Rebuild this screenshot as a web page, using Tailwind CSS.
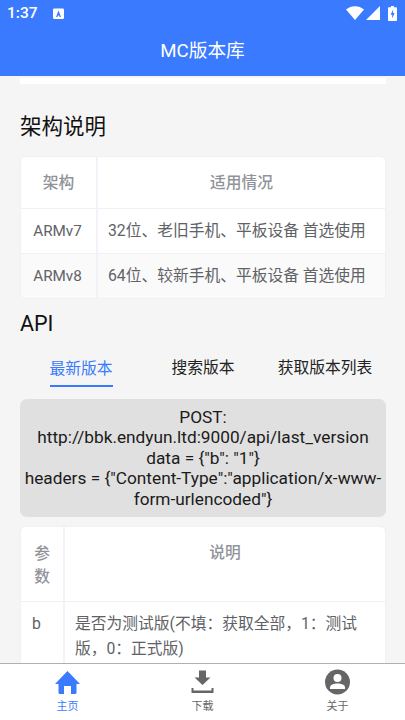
<!DOCTYPE html>
<html lang="zh-CN">

<head>
    <meta charset="UTF-8">
    <title>MC版本库</title>
    <meta name="viewport" content="width=device-width, initial-scale=1.0">
    <script src="https://cdn.jsdelivr.net/npm/@tailwindcss/browser@4"></script>
</head>

<body class="h-[720px] w-[405px] overflow-hidden flex flex-col bg-[#f5f5f5] font-['Roboto','Noto_Sans_CJK_SC',sans-serif]">
    <!-- status bar + title -->
    <header class="h-[76px] shrink-0 bg-[#3a7afe] text-white">
        <div class="h-[26px] flex items-center pl-[7px] pr-[8px]">
            <span class="text-[15.5px] font-medium leading-none mt-[2px]">1:37</span>
            <svg class="ml-[15px] mt-[1px]" width="11" height="12" viewBox="0 0 11 12">
                <rect x="0" y="0.5" width="11" height="10.5" rx="1.2" fill="#fff" />
                <path d="M5.5 2.5 L3 9 H4.4 L4.9 7.6 H6.1 L6.6 9 H8 Z" fill="#3a7afe" />
            </svg>
            <div class="ml-auto flex items-center">
                <svg width="18" height="14" viewBox="0 0 18 14">
                    <path d="M0 3.6 C5 -0.9 13 -0.9 18 3.6 L9 14 Z" fill="#fff" />
                </svg>
                <svg class="ml-[2px]" width="14" height="14" viewBox="0 0 14 14">
                    <path d="M14 0 V14 H0 Z" fill="#fff" />
                </svg>
                <svg class="ml-[8px]" width="9" height="15" viewBox="0 0 9 15">
                    <path d="M3 0 H6 V1.2 H8.2 A.8 .8 0 0 1 9 2 V14.2 A.8 .8 0 0 1 8.2 15 H.8 A.8 .8 0 0 1 0 14.2 V2 A.8 .8 0 0 1 .8 1.2 H3 Z" fill="#fff" />
                    <path d="M5.2 3.5 L2.6 8.8 H4.2 V12.5 L6.6 7 H5 Z" fill="#3a7afe" />
                </svg>
            </div>
        </div>
        <h1 class="text-center text-[18.700px] leading-[50px] font-normal">MC版本库</h1>
    </header>

    <main class="flex-1 min-h-0 overflow-hidden pt-px">
        <div class="ml-[20px] mr-[19px] h-[7px] bg-white border-t border-[#f5f5f5]"></div>

        <h2 class="ml-[20px] mt-[28px] text-[21.500px] leading-[30px] text-[#111]">架构说明</h2>
        <div class="ml-[20px] mr-[19px] mt-[14px] rounded-[5px] border border-[#f0f0f6] bg-white overflow-hidden text-[15.750px]">
            <div class="flex h-[52px] items-center border-b border-[#f0f0f6] font-medium text-[#909399]">
                <div class="w-[77px] h-full flex items-center justify-center border-r-2 border-[#f2f2f8]">架构</div>
                <div class="flex-1 text-center">适用情况</div>
            </div>
            <div class="flex h-[45px] items-center border-b border-[#f0f0f6] text-[#606266]">
                <div class="w-[77px] h-full flex items-center justify-center border-r-2 border-[#f2f2f8] pr-[2px] text-[15.250px]">ARMv7</div>
                <div class="flex-1 pl-[10px] whitespace-nowrap">32位、老旧手机、平板设备 首选使用</div>
            </div>
            <div class="flex h-[44px] items-center bg-[#fafafa] text-[#606266]">
                <div class="w-[77px] h-full flex items-center justify-center border-r-2 border-[#f2f2f8] pr-[2px] text-[15.250px]">ARMv8</div>
                <div class="flex-1 pl-[10px] whitespace-nowrap">64位、较新手机、平板设备 首选使用</div>
            </div>
        </div>

        <h2 class="ml-[20px] mt-[10px] text-[21.500px] leading-[30px] text-[#111]">API</h2>

        <div class="mt-[18px] ml-[20px] flex w-[366px] text-[15.750px] text-[#222]">
            <div class="w-[122px] text-center">
                <span class="inline-block w-[63px] h-[29px] leading-[22px] text-[#3a7afe] border-b-2 border-[#3a7afe] whitespace-nowrap">最新版本</span>
            </div>
            <div class="w-[122px] text-center leading-[22px]">搜索版本</div>
            <div class="w-[122px] text-center leading-[22px]">获取版本列表</div>
        </div>

        <div class="ml-[20px] mr-[19px] mt-[12px] rounded-[7px] bg-[#e0e0e0] px-[4px] pt-[8px] h-[118px] text-center text-[17.250px] leading-[20.400px] text-[#1b1b1b]">
            POST:<br>http://bbk.endyun.ltd:9000/api/last_version<br>data = {"b": "1"}<br>headers = {"Content-Type":"application/x-www-form-urlencoded"}
        </div>

        <div class="ml-[20px] mr-[19px] mt-[9px] rounded-[5px] border border-[#f0f0f6] bg-white overflow-hidden text-[15.750px]">
            <div class="flex h-[75px] border-b border-[#f0f0f6] font-medium text-[#909399] leading-[23px]">
                <div class="w-[44px] h-full pt-[15px] text-center border-r-2 border-[#f2f2f8] px-[11px]">参数</div>
                <div class="flex-1 pt-[14px] text-center">说明</div>
            </div>
            <div class="flex text-[#606266] leading-[25px] h-[90px]">
                <div class="w-[44px] pl-[11px] pt-[9px] border-r-2 border-[#f2f2f8]">b</div>
                <div class="flex-1 pl-[10px] pr-[11px] pt-[9px]">是否为测试版(不填：获取全部，1：测试版，0：正式版)</div>
            </div>
        </div>
    </main>

    <nav class="h-[57px] shrink-0 relative z-10 flex bg-white border-t border-[#b0b0b0] text-[11px] text-[#666]">
        <div class="w-[135px] flex flex-col items-center">
            <svg class="mt-[5px]" width="27" height="27" viewBox="0 0 27 27">
                <path d="M13.500 2 L26 15 H22.500 V23.500 a1.500 1.500 0 0 1 -1.500 1.500 H17 V17 H10 V25 H6 a1.500 1.500 0 0 1 -1.500 -1.500 V15 H1 Z" fill="#3a7afe" />
            </svg>
            <span class="text-[#3a7afe] leading-[14px] mt-[4px]">主页</span>
        </div>
        <div class="w-[135px] flex flex-col items-center">
            <svg class="mt-[5px]" width="27" height="27" viewBox="0 0 27 27">
                <path d="M10 1.500h7v7h4.500l-8 7.500-8-7.500h4.500z" fill="#666" />
                <path d="M2.500 19h2v2.500h18v-2.500h2v5h-22z" fill="#666" />
            </svg>
            <span class="leading-[14px] mt-[4px]">下载</span>
        </div>
        <div class="w-[135px] flex flex-col items-center">
            <svg class="mt-[5px]" width="27" height="27" viewBox="0 0 27 27">
                <circle cx="13.500" cy="13" r="12.500" fill="#666" />
                <circle cx="13.500" cy="9" r="4" fill="#fff" />
                <path d="M6 18.500 C6 15.500 10 14.500 13.500 14.500 C17 14.500 21 15.500 21 18.500 V20 H6 Z" fill="#fff" />
            </svg>
            <span class="leading-[14px] mt-[4px]">关于</span>
        </div>
    </nav>
</body>

</html>
